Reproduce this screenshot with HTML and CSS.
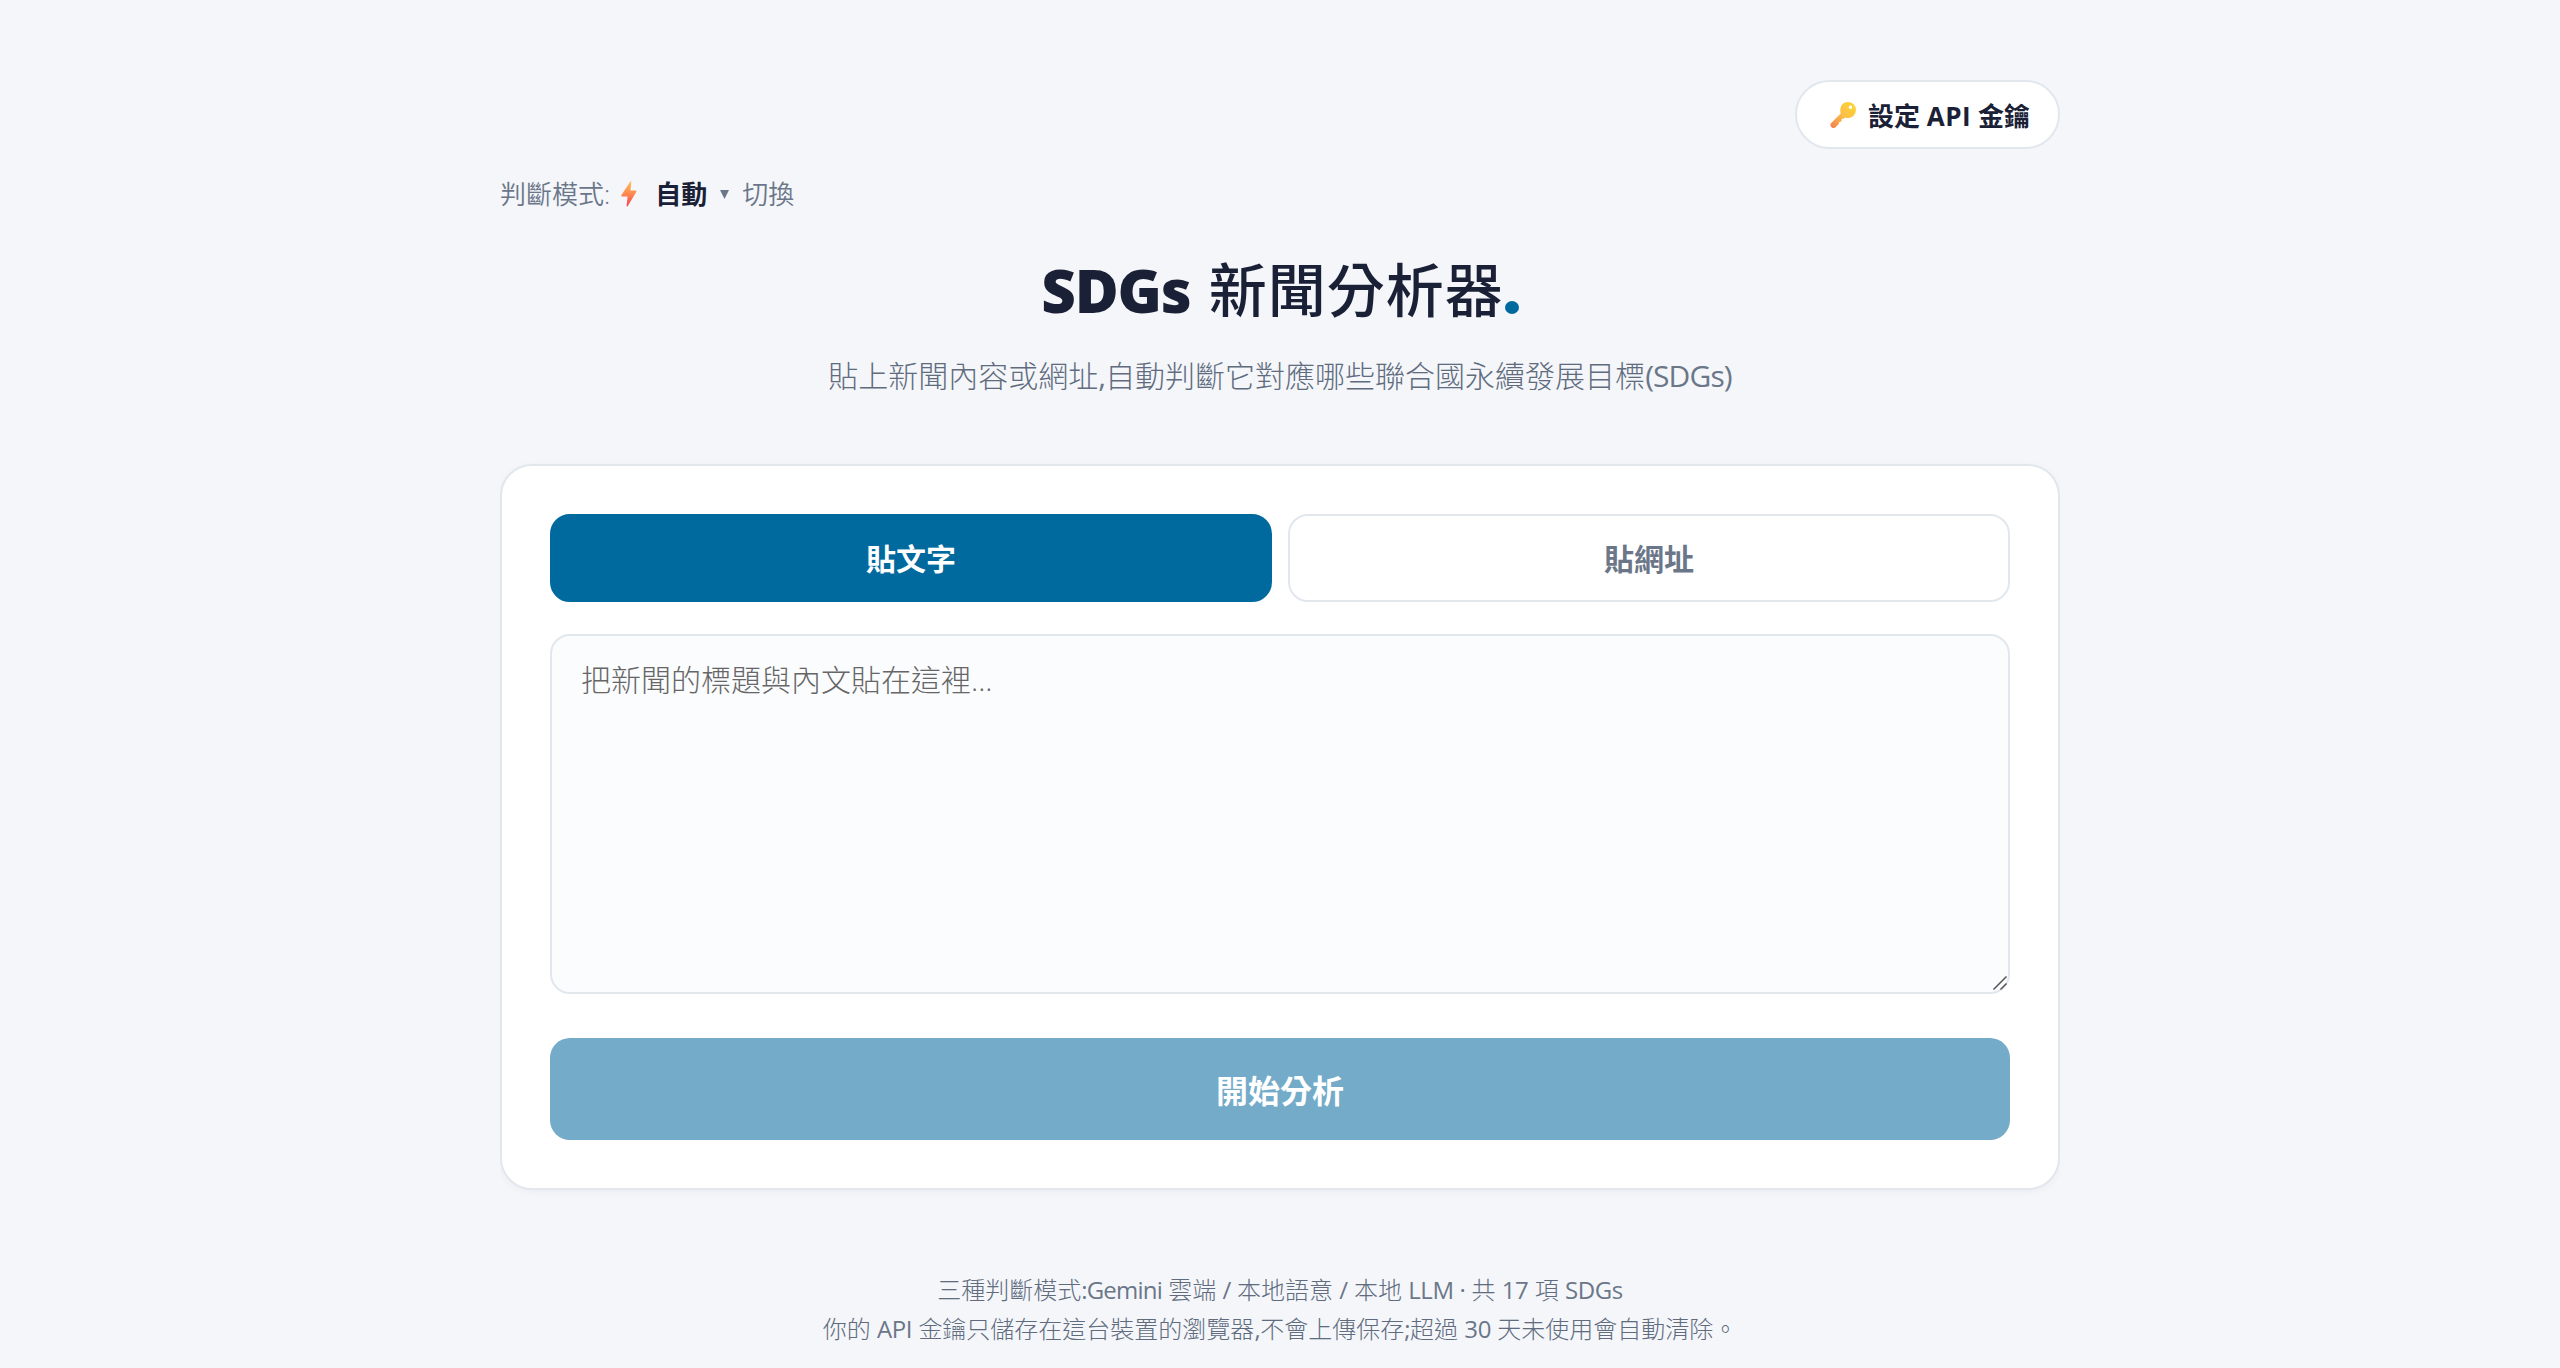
FILE: index.html
```html
<!DOCTYPE html>
<html lang="zh-Hant">
<head>
<meta charset="utf-8">
<title>SDGs 新聞分析器</title>
<link rel="stylesheet" href="styles.css">
</head>
<body>
<main class="page">
  <header class="topbar">
    <button class="key-button" type="button">
      <svg class="key-icon" viewBox="0 0 26 26" aria-hidden="true">
        <defs><linearGradient id="key" x1="1" y1="0" x2="0" y2="1"><stop offset="0" stop-color="#fdd835"/><stop offset=".5" stop-color="#fcbf47"/><stop offset="1" stop-color="#f37e50"/></linearGradient></defs>
        <path fill="url(#key)" fill-rule="evenodd" d="M18 0a8 8 0 0 1 0 16c-1.200 0-2-.1-3-.500l-1.300 1.300h-2v2l-1.400 1.200H9v1.700L5.500 25.200A3 3 0 0 1 1 21.300L10.700 11.500C9 5 12.500 0 18 0zM20.500 3.500a1.800 1.800 0 1 0 0 3.600 1.800 1.800 0 0 0 0-3.600z"/>
      </svg>
      <span class="key-label">設定 <span class="latin">API</span> 金鑰</span>
    </button>
  </header>
  <div class="mode">
    <span>判斷模式:</span>
    <svg class="bolt-icon" viewBox="0 0 16 26" aria-hidden="true">
      <defs><linearGradient id="bolt" x1="0" y1="0" x2="0" y2="1"><stop offset="0" stop-color="#ffc052"/><stop offset=".5" stop-color="#ff8850"/><stop offset="1" stop-color="#f8414e"/></linearGradient></defs>
      <path fill="url(#bolt)" d="M9.300.5Q10.500-.3 10.300 1L9.400 9.500H14.500Q16 9.700 15.200 11L6.800 25Q5.600 26.200 5.600 24.800L6.600 15.500H1.200Q-.2 15.300.5 14z"/>
    </svg>
    <strong class="mode-name">自動</strong>
    <svg class="caret" viewBox="0 0 9 9" aria-hidden="true"><path d="M0 0h9L4.500 9z" fill="#6b7789"/></svg>
    <span>切換</span>
  </div>
  <h1 class="title"><span class="title-latin">SDGs</span><span class="title-cjk">新聞分析器</span><span class="title-dot"></span></h1>
  <p class="subtitle">貼上新聞內容或網址<span class="latin">,</span>自動判斷它對應哪些聯合國永續發展目標<span class="latin">(SDGs)</span></p>
  <section class="card">
    <div class="tabs">
      <button class="tab tab-active" type="button">貼文字</button>
      <button class="tab" type="button">貼網址</button>
    </div>
    <div class="field">
      <textarea class="input" placeholder="把新聞的標題與內文貼在這裡..."></textarea>
      <svg class="grip" viewBox="0 0 16 16" aria-hidden="true"><path d="M1.500 14.500l13-13M8.500 14.500l6-6" stroke="#555" stroke-width="1.500"/></svg>
    </div>
    <button class="submit" type="button">開始分析</button>
  </section>
  <footer class="footer">
    <p class="note">三種判斷模式<span class="latin latin-tight">:Gemini</span> 雲端 <span class="latin">/</span> 本地語意 <span class="latin">/</span> 本地 <span class="latin">LLM ·</span> 共 <span class="latin">17</span> 項 <span class="latin">SDGs</span></p>
    <p class="note">你的 <span class="latin">API</span> 金鑰只儲存在這台裝置的瀏覽器<span class="latin">,</span>不會上傳保存<span class="latin">;</span>超過 <span class="latin">30</span> 天未使用會自動清除。</p>
  </footer>
</main>
</body>
</html>
```
FILE: styles.css
```css
* { box-sizing: border-box; }
body {
  margin: 0;
  background: #f4f6fa;
  color: #1a2136;
  font-family: "Open Sans", "Noto Sans CJK TC", sans-serif;
  font-weight: 300;
}
button, textarea { font-family: inherit; }
p, h1 { margin: 0; }
.latin { font-weight: 400; }
.page {
  width: 1560px;
  height: 1368px;
  margin: 0 auto;
  padding-top: 80px;
  overflow: hidden;
  white-space: nowrap;
}
.topbar { display: flex; justify-content: flex-end; }
.key-button {
  display: flex;
  align-items: center;
  gap: 12px;
  width: 265px;
  height: 69px;
  padding: 0 0 0 33px;
  border: 2px solid #e2e7ee;
  border-radius: 35px;
  background: #fff;
  color: #1a2136;
  font-size: 26px;
  font-weight: 700;
}
.key-icon { width: 26px; height: 26px; }
.key-label .latin { font-weight: 700; letter-spacing: .5px; }
.mode {
  display: flex;
  align-items: center;
  height: 40px;
  margin-top: 24px;
  color: #6b7789;
  font-size: 26px;
  font-weight: 350;
}
.bolt-icon { width: 16px; height: 26px; margin: 2px 0 0 11px; }
.mode-name { margin-left: 18px; color: #1a2136; font-weight: 700; }
.caret { width: 9px; height: 9px; margin: 2px 13px 0 13px; }
.title {
  display: flex;
  justify-content: center;
  align-items: center;
  height: 80px;
  margin-top: 37px;
  font-size: 60px;
  line-height: 80px;
}
.title-latin { font-weight: 800; letter-spacing: -1.2px; }
.title-cjk { margin-left: 18px; font-size: 58px; font-weight: 500; letter-spacing: 1px; }
.title-dot { width: 14px; height: 13px; margin: 34px 0 0 1px; border-radius: 50%; background: #006a9f; }
.subtitle {
  height: 44px;
  margin-top: 24px;
  color: #606c7e;
  font-size: 30px;
  line-height: 44px;
  text-align: center;
}
.subtitle .latin { color: #6b7789; letter-spacing: -.9px; }
.card {
  height: 726px;
  margin-top: 66px;
  padding: 48px;
  border: 2px solid #e2e7ee;
  border-radius: 32px;
  background: #fff;
  box-shadow: 0 2px 8px rgba(26, 33, 56, .04);
}
.tabs { display: flex; gap: 16px; }
.tab {
  flex: 1;
  height: 88px;
  padding: 0 0 2px;
  border: 2px solid #e2e7ee;
  border-radius: 20px;
  background: #fff;
  color: #6b7789;
  font-size: 30px;
  font-weight: 700;
}
.tab-active { border-color: #006a9f; background: #006a9f; color: #fff; }
.field { position: relative; margin-top: 32px; height: 360px; }
.input {
  display: block;
  width: 100%;
  height: 360px;
  padding: 22px 29px;
  border: 2px solid #e2e7ee;
  border-radius: 20px;
  background: #fbfcfe;
  font-size: 30px;
  font-weight: 300;
  line-height: 44px;
  resize: none;
}
.input::placeholder { color: #666; }
.grip { position: absolute; right: 2px; bottom: 3px; width: 16px; height: 16px; }
.submit {
  display: block;
  width: 100%;
  height: 102px;
  margin-top: 44px;
  padding: 0;
  border: 0;
  border-radius: 20px;
  background: #73abc9;
  color: #fff;
  font-size: 32px;
  font-weight: 700;
}
.footer {
  margin-top: 80px;
  color: #606c7e;
  font-size: 24px;
  line-height: 39px;
  text-align: center;
}
.footer .latin { color: #6b7789; letter-spacing: -.4px; }
.footer .latin-tight { letter-spacing: -.8px; }
```
